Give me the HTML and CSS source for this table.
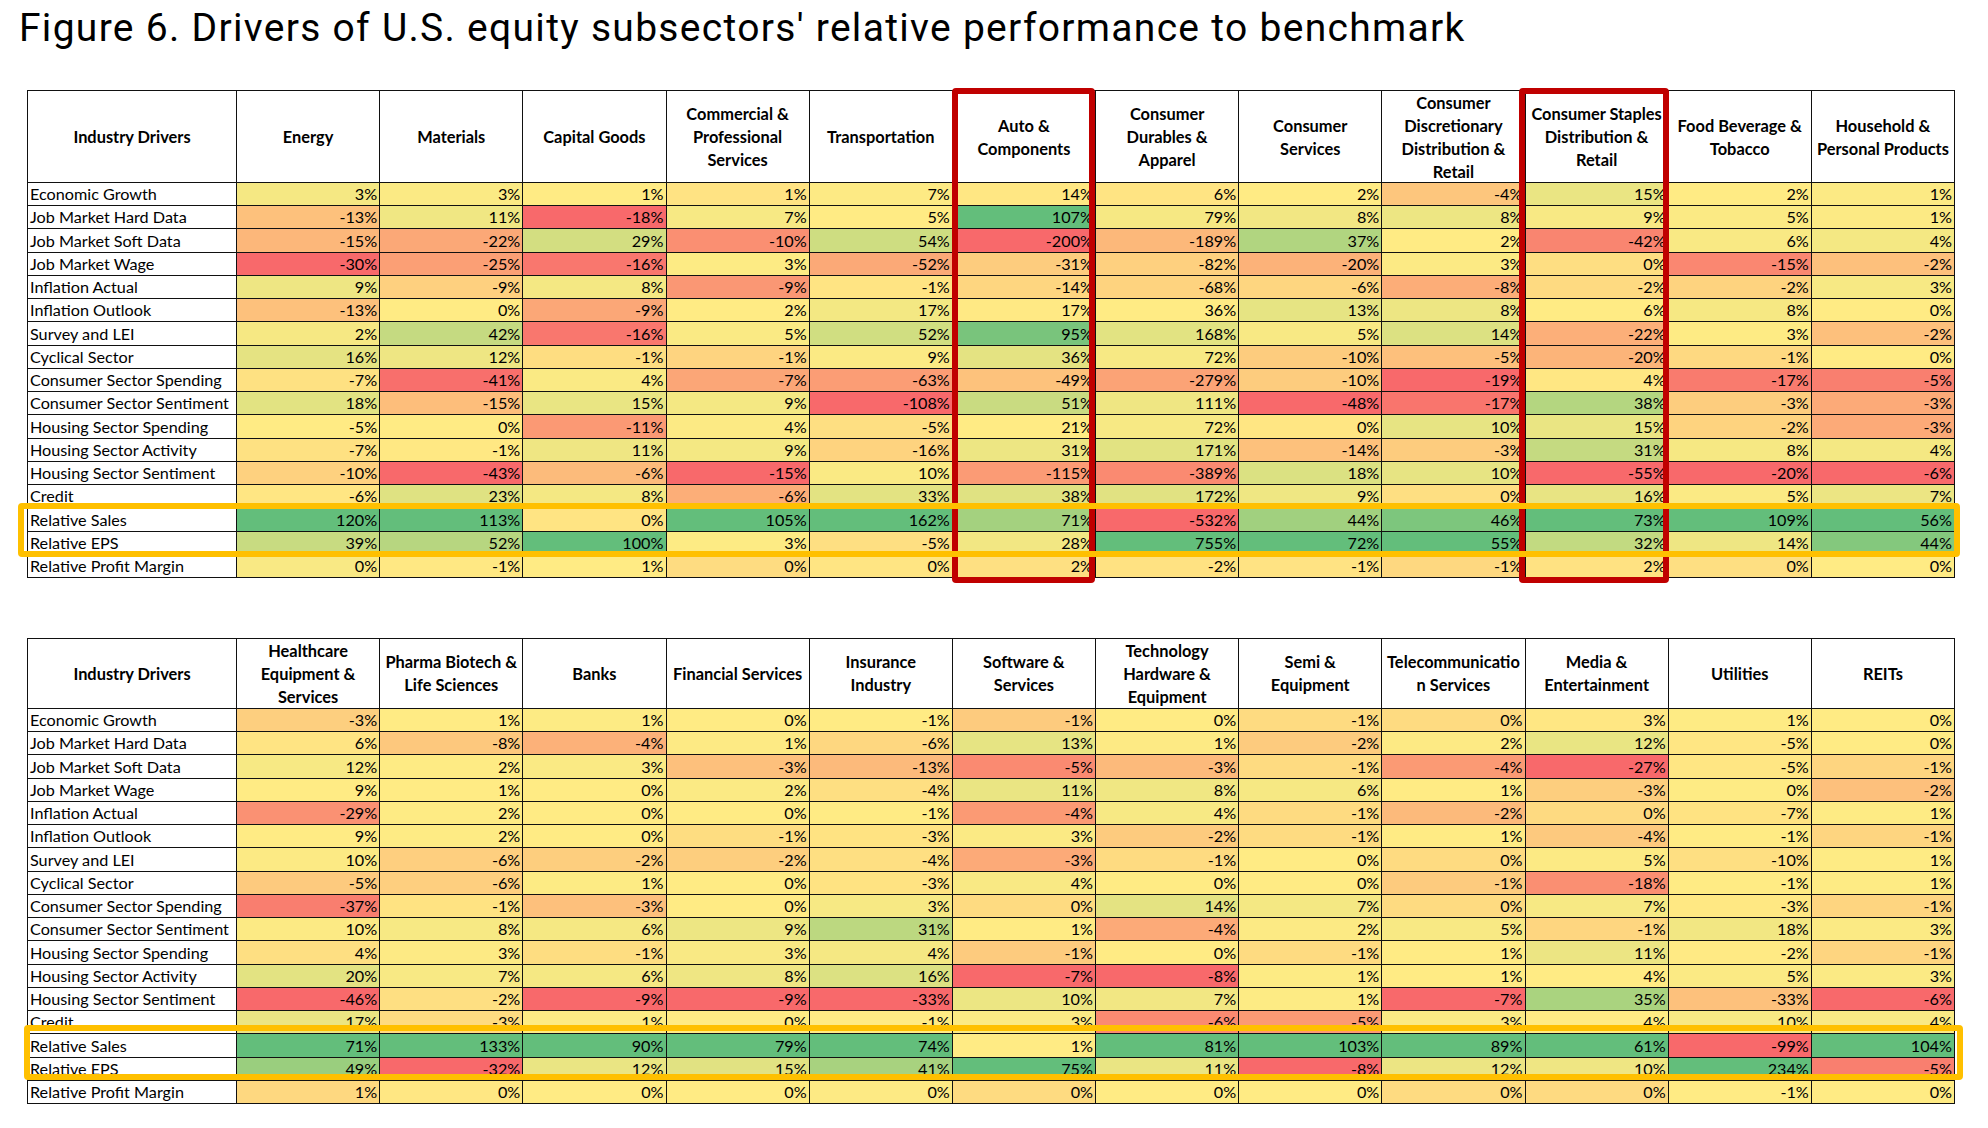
FILE: index.html
```html
<!DOCTYPE html>
<html lang="en">
<head>
<meta charset="utf-8">
<title>Figure 6</title>
<link rel="stylesheet" href="styles.css">
</head>
<body>
<h1 class="title">Figure 6. Drivers of U.S. equity subsectors' relative performance to benchmark</h1>

<section class="panel panel-top">
  <div class="heat heat-top">
    <div class="hc">Industry Drivers</div><div class="hc">Energy</div><div class="hc">Materials</div><div class="hc">Capital Goods</div><div class="hc">Commercial &amp;<br>Professional<br>Services</div><div class="hc">Transportation</div><div class="hc">Auto &amp;<br>Components</div><div class="hc">Consumer<br>Durables &amp;<br>Apparel</div><div class="hc">Consumer<br>Services</div><div class="hc">Consumer<br>Discretionary<br>Distribution &amp;<br>Retail</div><div class="hc">Consumer Staples<br>Distribution &amp;<br>Retail</div><div class="hc">Food Beverage &amp;<br>Tobacco</div><div class="hc">Household &amp;<br>Personal Products</div>
    <div class="lc">Economic Growth</div><div class="vc">3%</div><div class="vc">3%</div><div class="vc">1%</div><div class="vc">1%</div><div class="vc">7%</div><div class="vc">14%</div><div class="vc">6%</div><div class="vc">2%</div><div class="vc">-4%</div><div class="vc">15%</div><div class="vc">2%</div><div class="vc">1%</div>
    <div class="lc">Job Market Hard Data</div><div class="vc">-13%</div><div class="vc">11%</div><div class="vc">-18%</div><div class="vc">7%</div><div class="vc">5%</div><div class="vc">107%</div><div class="vc">79%</div><div class="vc">8%</div><div class="vc">8%</div><div class="vc">9%</div><div class="vc">5%</div><div class="vc">1%</div>
    <div class="lc">Job Market Soft Data</div><div class="vc">-15%</div><div class="vc">-22%</div><div class="vc">29%</div><div class="vc">-10%</div><div class="vc">54%</div><div class="vc">-200%</div><div class="vc">-189%</div><div class="vc">37%</div><div class="vc">2%</div><div class="vc">-42%</div><div class="vc">6%</div><div class="vc">4%</div>
    <div class="lc">Job Market Wage</div><div class="vc">-30%</div><div class="vc">-25%</div><div class="vc">-16%</div><div class="vc">3%</div><div class="vc">-52%</div><div class="vc">-31%</div><div class="vc">-82%</div><div class="vc">-20%</div><div class="vc">3%</div><div class="vc">0%</div><div class="vc">-15%</div><div class="vc">-2%</div>
    <div class="lc">Inflation Actual</div><div class="vc">9%</div><div class="vc">-9%</div><div class="vc">8%</div><div class="vc">-9%</div><div class="vc">-1%</div><div class="vc">-14%</div><div class="vc">-68%</div><div class="vc">-6%</div><div class="vc">-8%</div><div class="vc">-2%</div><div class="vc">-2%</div><div class="vc">3%</div>
    <div class="lc">Inflation Outlook</div><div class="vc">-13%</div><div class="vc">0%</div><div class="vc">-9%</div><div class="vc">2%</div><div class="vc">17%</div><div class="vc">17%</div><div class="vc">36%</div><div class="vc">13%</div><div class="vc">8%</div><div class="vc">6%</div><div class="vc">8%</div><div class="vc">0%</div>
    <div class="lc">Survey and LEI</div><div class="vc">2%</div><div class="vc">42%</div><div class="vc">-16%</div><div class="vc">5%</div><div class="vc">52%</div><div class="vc">95%</div><div class="vc">168%</div><div class="vc">5%</div><div class="vc">14%</div><div class="vc">-22%</div><div class="vc">3%</div><div class="vc">-2%</div>
    <div class="lc">Cyclical Sector</div><div class="vc">16%</div><div class="vc">12%</div><div class="vc">-1%</div><div class="vc">-1%</div><div class="vc">9%</div><div class="vc">36%</div><div class="vc">72%</div><div class="vc">-10%</div><div class="vc">-5%</div><div class="vc">-20%</div><div class="vc">-1%</div><div class="vc">0%</div>
    <div class="lc">Consumer Sector Spending</div><div class="vc">-7%</div><div class="vc">-41%</div><div class="vc">4%</div><div class="vc">-7%</div><div class="vc">-63%</div><div class="vc">-49%</div><div class="vc">-279%</div><div class="vc">-10%</div><div class="vc">-19%</div><div class="vc">4%</div><div class="vc">-17%</div><div class="vc">-5%</div>
    <div class="lc">Consumer Sector Sentiment</div><div class="vc">18%</div><div class="vc">-15%</div><div class="vc">15%</div><div class="vc">9%</div><div class="vc">-108%</div><div class="vc">51%</div><div class="vc">111%</div><div class="vc">-48%</div><div class="vc">-17%</div><div class="vc">38%</div><div class="vc">-3%</div><div class="vc">-3%</div>
    <div class="lc">Housing Sector Spending</div><div class="vc">-5%</div><div class="vc">0%</div><div class="vc">-11%</div><div class="vc">4%</div><div class="vc">-5%</div><div class="vc">21%</div><div class="vc">72%</div><div class="vc">0%</div><div class="vc">10%</div><div class="vc">15%</div><div class="vc">-2%</div><div class="vc">-3%</div>
    <div class="lc">Housing Sector Activity</div><div class="vc">-7%</div><div class="vc">-1%</div><div class="vc">11%</div><div class="vc">9%</div><div class="vc">-16%</div><div class="vc">31%</div><div class="vc">171%</div><div class="vc">-14%</div><div class="vc">-3%</div><div class="vc">31%</div><div class="vc">8%</div><div class="vc">4%</div>
    <div class="lc">Housing Sector Sentiment</div><div class="vc">-10%</div><div class="vc">-43%</div><div class="vc">-6%</div><div class="vc">-15%</div><div class="vc">10%</div><div class="vc">-115%</div><div class="vc">-389%</div><div class="vc">18%</div><div class="vc">10%</div><div class="vc">-55%</div><div class="vc">-20%</div><div class="vc">-6%</div>
    <div class="lc">Credit</div><div class="vc">-6%</div><div class="vc">23%</div><div class="vc">8%</div><div class="vc">-6%</div><div class="vc">33%</div><div class="vc">38%</div><div class="vc">172%</div><div class="vc">9%</div><div class="vc">0%</div><div class="vc">16%</div><div class="vc">5%</div><div class="vc">7%</div>
    <div class="lc">Relative Sales</div><div class="vc">120%</div><div class="vc">113%</div><div class="vc">0%</div><div class="vc">105%</div><div class="vc">162%</div><div class="vc">71%</div><div class="vc">-532%</div><div class="vc">44%</div><div class="vc">46%</div><div class="vc">73%</div><div class="vc">109%</div><div class="vc">56%</div>
    <div class="lc">Relative EPS</div><div class="vc">39%</div><div class="vc">52%</div><div class="vc">100%</div><div class="vc">3%</div><div class="vc">-5%</div><div class="vc">28%</div><div class="vc">755%</div><div class="vc">72%</div><div class="vc">55%</div><div class="vc">32%</div><div class="vc">14%</div><div class="vc">44%</div>
    <div class="lc">Relative Profit Margin</div><div class="vc">0%</div><div class="vc">-1%</div><div class="vc">1%</div><div class="vc">0%</div><div class="vc">0%</div><div class="vc">2%</div><div class="vc">-2%</div><div class="vc">-1%</div><div class="vc">-1%</div><div class="vc">2%</div><div class="vc">0%</div><div class="vc">0%</div>
  </div>
  <div class="box box-red box-auto"></div>
  <div class="box box-red box-staples"></div>
  <div class="box box-gold box-gold-top"></div>
</section>

<section class="panel panel-bottom">
  <div class="heat heat-bottom">
    <div class="hc">Industry Drivers</div><div class="hc">Healthcare<br>Equipment &amp;<br>Services</div><div class="hc">Pharma Biotech &amp;<br>Life Sciences</div><div class="hc">Banks</div><div class="hc">Financial Services</div><div class="hc">Insurance<br>Industry</div><div class="hc">Software &amp;<br>Services</div><div class="hc">Technology<br>Hardware &amp;<br>Equipment</div><div class="hc">Semi &amp;<br>Equipment</div><div class="hc">Telecommunicatio<br>n Services</div><div class="hc">Media &amp;<br>Entertainment</div><div class="hc">Utilities</div><div class="hc">REITs</div>
    <div class="lc">Economic Growth</div><div class="vc">-3%</div><div class="vc">1%</div><div class="vc">1%</div><div class="vc">0%</div><div class="vc">-1%</div><div class="vc">-1%</div><div class="vc">0%</div><div class="vc">-1%</div><div class="vc">0%</div><div class="vc">3%</div><div class="vc">1%</div><div class="vc">0%</div>
    <div class="lc">Job Market Hard Data</div><div class="vc">6%</div><div class="vc">-8%</div><div class="vc">-4%</div><div class="vc">1%</div><div class="vc">-6%</div><div class="vc">13%</div><div class="vc">1%</div><div class="vc">-2%</div><div class="vc">2%</div><div class="vc">12%</div><div class="vc">-5%</div><div class="vc">0%</div>
    <div class="lc">Job Market Soft Data</div><div class="vc">12%</div><div class="vc">2%</div><div class="vc">3%</div><div class="vc">-3%</div><div class="vc">-13%</div><div class="vc">-5%</div><div class="vc">-3%</div><div class="vc">-1%</div><div class="vc">-4%</div><div class="vc">-27%</div><div class="vc">-5%</div><div class="vc">-1%</div>
    <div class="lc">Job Market Wage</div><div class="vc">9%</div><div class="vc">1%</div><div class="vc">0%</div><div class="vc">2%</div><div class="vc">-4%</div><div class="vc">11%</div><div class="vc">8%</div><div class="vc">6%</div><div class="vc">1%</div><div class="vc">-3%</div><div class="vc">0%</div><div class="vc">-2%</div>
    <div class="lc">Inflation Actual</div><div class="vc">-29%</div><div class="vc">2%</div><div class="vc">0%</div><div class="vc">0%</div><div class="vc">-1%</div><div class="vc">-4%</div><div class="vc">4%</div><div class="vc">-1%</div><div class="vc">-2%</div><div class="vc">0%</div><div class="vc">-7%</div><div class="vc">1%</div>
    <div class="lc">Inflation Outlook</div><div class="vc">9%</div><div class="vc">2%</div><div class="vc">0%</div><div class="vc">-1%</div><div class="vc">-3%</div><div class="vc">3%</div><div class="vc">-2%</div><div class="vc">-1%</div><div class="vc">1%</div><div class="vc">-4%</div><div class="vc">-1%</div><div class="vc">-1%</div>
    <div class="lc">Survey and LEI</div><div class="vc">10%</div><div class="vc">-6%</div><div class="vc">-2%</div><div class="vc">-2%</div><div class="vc">-4%</div><div class="vc">-3%</div><div class="vc">-1%</div><div class="vc">0%</div><div class="vc">0%</div><div class="vc">5%</div><div class="vc">-10%</div><div class="vc">1%</div>
    <div class="lc">Cyclical Sector</div><div class="vc">-5%</div><div class="vc">-6%</div><div class="vc">1%</div><div class="vc">0%</div><div class="vc">-3%</div><div class="vc">4%</div><div class="vc">0%</div><div class="vc">0%</div><div class="vc">-1%</div><div class="vc">-18%</div><div class="vc">-1%</div><div class="vc">1%</div>
    <div class="lc">Consumer Sector Spending</div><div class="vc">-37%</div><div class="vc">-1%</div><div class="vc">-3%</div><div class="vc">0%</div><div class="vc">3%</div><div class="vc">0%</div><div class="vc">14%</div><div class="vc">7%</div><div class="vc">0%</div><div class="vc">7%</div><div class="vc">-3%</div><div class="vc">-1%</div>
    <div class="lc">Consumer Sector Sentiment</div><div class="vc">10%</div><div class="vc">8%</div><div class="vc">6%</div><div class="vc">9%</div><div class="vc">31%</div><div class="vc">1%</div><div class="vc">-4%</div><div class="vc">2%</div><div class="vc">5%</div><div class="vc">-1%</div><div class="vc">18%</div><div class="vc">3%</div>
    <div class="lc">Housing Sector Spending</div><div class="vc">4%</div><div class="vc">3%</div><div class="vc">-1%</div><div class="vc">3%</div><div class="vc">4%</div><div class="vc">-1%</div><div class="vc">0%</div><div class="vc">-1%</div><div class="vc">1%</div><div class="vc">11%</div><div class="vc">-2%</div><div class="vc">-1%</div>
    <div class="lc">Housing Sector Activity</div><div class="vc">20%</div><div class="vc">7%</div><div class="vc">6%</div><div class="vc">8%</div><div class="vc">16%</div><div class="vc">-7%</div><div class="vc">-8%</div><div class="vc">1%</div><div class="vc">1%</div><div class="vc">4%</div><div class="vc">5%</div><div class="vc">3%</div>
    <div class="lc">Housing Sector Sentiment</div><div class="vc">-46%</div><div class="vc">-2%</div><div class="vc">-9%</div><div class="vc">-9%</div><div class="vc">-33%</div><div class="vc">10%</div><div class="vc">7%</div><div class="vc">1%</div><div class="vc">-7%</div><div class="vc">35%</div><div class="vc">-33%</div><div class="vc">-6%</div>
    <div class="lc">Credit</div><div class="vc">17%</div><div class="vc">-3%</div><div class="vc">1%</div><div class="vc">0%</div><div class="vc">-1%</div><div class="vc">3%</div><div class="vc">-6%</div><div class="vc">-5%</div><div class="vc">3%</div><div class="vc">4%</div><div class="vc">10%</div><div class="vc">4%</div>
    <div class="lc">Relative Sales</div><div class="vc">71%</div><div class="vc">133%</div><div class="vc">90%</div><div class="vc">79%</div><div class="vc">74%</div><div class="vc">1%</div><div class="vc">81%</div><div class="vc">103%</div><div class="vc">89%</div><div class="vc">61%</div><div class="vc">-99%</div><div class="vc">104%</div>
    <div class="lc">Relative EPS</div><div class="vc">49%</div><div class="vc">-32%</div><div class="vc">12%</div><div class="vc">15%</div><div class="vc">41%</div><div class="vc">75%</div><div class="vc">11%</div><div class="vc">-8%</div><div class="vc">12%</div><div class="vc">10%</div><div class="vc">234%</div><div class="vc">-5%</div>
    <div class="lc">Relative Profit Margin</div><div class="vc">1%</div><div class="vc">0%</div><div class="vc">0%</div><div class="vc">0%</div><div class="vc">0%</div><div class="vc">0%</div><div class="vc">0%</div><div class="vc">0%</div><div class="vc">0%</div><div class="vc">0%</div><div class="vc">-1%</div><div class="vc">0%</div>
  </div>
  <div class="box box-gold box-gold-bottom"></div>
</section>

<script src="script.js"></script>
</body>
</html>
```

FILE: styles.css
```css
* { box-sizing: border-box; }

html, body {
  margin: 0;
  background: #ffffff;
}

body {
  width: 1988px;
  height: 1128px;
  overflow: hidden;
  font-family: Lato, "Noto Sans", sans-serif;
  color: #000000;
}

.title {
  margin: 0;
  padding: 5px 0 0 19px;
  font-family: Roboto, "Liberation Sans", sans-serif;
  font-weight: 400;
  font-size: 39px;
  line-height: 46px;
  letter-spacing: 1.3px;
  color: #000000;
  white-space: nowrap;
}

.panel {
  position: relative;
  width: 1928px;
  margin-left: 27px;
}

.panel-top { margin-top: 39px; }
.panel-bottom { margin-top: 60px; }

.heat {
  display: grid;
  grid-template-columns: 208px repeat(12, 1fr);
  grid-auto-rows: 22.24px;
  gap: 1px;
  padding: 1px;
  background: #111111;
}

.heat-top { grid-template-rows: 91px; }
.heat-bottom { grid-template-rows: 69px; }

.hc {
  display: flex;
  align-items: center;
  justify-content: center;
  background: #ffffff;
  text-align: center;
  font-weight: 700;
  font-size: 16.4px;
  line-height: 23px;
  white-space: nowrap;
  overflow: hidden;
}

.lc {
  display: flex;
  align-items: flex-end;
  padding: 0 0 1px 2px;
  background: #ffffff;
  font-size: 16.2px;
  line-height: 20px;
  white-space: nowrap;
  overflow: hidden;
}

.vc {
  display: flex;
  align-items: flex-end;
  justify-content: flex-end;
  padding: 0 2px 1px 0;
  background: #ffeb84;
  font-size: 16.2px;
  line-height: 20px;
  white-space: nowrap;
  overflow: hidden;
}

.box {
  position: absolute;
  border-radius: 4px;
  pointer-events: none;
}

.box-red { border: 6px solid #c00000; }
.box-gold { border: 6px solid #ffc000; }

.box-auto { left: 925px; top: -2px; width: 143px; height: 495px; }
.box-staples { left: 1492px; top: -2px; width: 150px; height: 495px; }
.box-gold-top { left: -9px; top: 413px; width: 1942px; height: 54px; }
.box-gold-bottom { left: -3px; top: 387px; width: 1939px; height: 55px; }
```

FILE: script.js
```js
(function () {
  var RED = [248, 105, 107];
  var YEL = [255, 235, 132];
  var GRN = [99, 190, 123];

  function mix(a, b, t) {
    return a.map(function (x, i) { return Math.round(x + (b[i] - x) * t); });
  }

  document.querySelectorAll('.heat').forEach(function (grid) {
    var cells = Array.prototype.slice.call(grid.querySelectorAll('.vc'));
    var cols = [];
    for (var c = 0; c < 12; c++) cols.push([]);
    cells.forEach(function (cell, k) { cols[k % 12].push(cell); });

    cols.forEach(function (col) {
      var vals = col.map(function (cell) { return parseFloat(cell.textContent); });
      var s = vals.slice().sort(function (a, b) { return a - b; });
      var min = s[0], max = s[s.length - 1];
      var r = (s.length - 1) * 0.5, lo = Math.floor(r), hi = Math.ceil(r);
      var mid = s[lo] + (s[hi] - s[lo]) * (r - lo);
      col.forEach(function (cell, i) {
        var v = vals[i], rgb;
        if (v <= mid) {
          rgb = mid === min ? YEL : mix(RED, YEL, (v - min) / (mid - min));
        } else {
          rgb = max === mid ? YEL : mix(YEL, GRN, (v - mid) / (max - mid));
        }
        cell.style.backgroundColor = 'rgb(' + rgb.join(',') + ')';
      });
    });
  });
})();
```
